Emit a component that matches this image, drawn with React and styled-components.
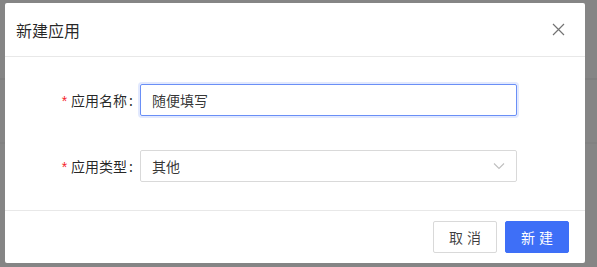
import React from "react";
import styled, { createGlobalStyle } from "styled-components";

const GlobalStyle = createGlobalStyle`
  html, body {
    margin: 0;
    padding: 0;
    background: #858585;
  }
  body {
    font-family: "Noto Sans CJK SC", "Noto Sans", sans-serif;
    font-size: 14px;
    color: rgba(0, 0, 0, 0.85);
  }
`;

const Mask = styled.div`
  width: 597px;
  height: 267px;
  box-sizing: border-box;
  padding: 3px 12px 0 5px;
  background:
    linear-gradient(#7f7f7f, #7f7f7f) 0 78px / 100% 2px no-repeat,
    linear-gradient(#818181, #818181) 0 142px / 100% 2px no-repeat,
    #858585;
`;

const Modal = styled.div`
  width: 580px;
  height: 260px;
  background: #fff;
  border-radius: 2px;
  display: flex;
  flex-direction: column;
  overflow: hidden;
`;

const Header = styled.div`
  height: 54px;
  box-sizing: border-box;
  padding: 0 20px 0 11px;
  border-bottom: 1px solid #e8e8e8;
  display: flex;
  align-items: center;
  justify-content: space-between;
`;

const Title = styled.div`
  font-size: 16px;
  font-weight: 400;
  color: rgba(0, 0, 0, 0.85);
  line-height: 22px;
`;

const Close = styled.button`
  border: 0;
  background: none;
  padding: 0;
  width: 14px;
  height: 14px;
  display: flex;
  align-items: center;
  justify-content: center;
  color: rgba(0, 0, 0, 0.55);
  cursor: pointer;
`;

const Body = styled.div`
  flex: 1;
  padding: 27px 24px 0;
  display: flex;
  flex-direction: column;
  gap: 34px;
`;

const Row = styled.div`
  display: flex;
  align-items: center;
  height: 32px;
`;

const Label = styled.label`
  width: 111px;
  flex: none;
  box-sizing: border-box;
  text-align: right;
  font-size: 14px;
  color: rgba(0, 0, 0, 0.85);
  white-space: nowrap;

  &::before {
    content: "*";
    color: #f5222d;
    margin-right: 4px;
    font-family: "Liberation Sans", sans-serif;
    font-size: 14px;
  }

  &::after {
    content: ":";
    margin: 0 7px 0 2px;
  }
`;

const Field = styled.div`
  width: 377px;
  height: 32px;
  box-sizing: border-box;
  border: 1px solid ${(p) => (p.focused ? "#6a8ff6" : "#d9d9d9")};
  box-shadow: ${(p) => (p.focused ? "0 0 0 2px rgba(61, 110, 247, 0.15)" : "none")};
  border-radius: 2px;
  padding: 0 11px;
  display: flex;
  align-items: center;
  justify-content: space-between;
  font-size: 14px;
  color: rgba(0, 0, 0, 0.8);
`;

const Footer = styled.div`
  height: 53px;
  box-sizing: border-box;
  border-top: 1px solid #e8e8e8;
  padding: 0 16px;
  display: flex;
  align-items: center;
  justify-content: flex-end;
  gap: 8px;
`;

const Button = styled.button`
  width: 64px;
  height: 32px;
  border-radius: 2px;
  font-family: inherit;
  font-size: 14px;
  letter-spacing: 4px;
  text-indent: 4px;
  cursor: pointer;
  border: 1px solid ${(p) => (p.primary ? "#3e6ff7" : "#d9d9d9")};
  background: ${(p) => (p.primary ? "#3e6ff7" : "#fff")};
  color: ${(p) => (p.primary ? "#fff" : "rgba(0, 0, 0, 0.75)")};
`;

const App = () => {
  return (
    <Mask>
      <GlobalStyle />
      <Modal>
        <Header>
          <Title>新建应用</Title>
          <Close aria-label="close">
            <svg width="13" height="13" viewBox="0 0 13 13">
              <path d="M1 1L12 12M12 1L1 12" stroke="currentColor" strokeWidth="1.2" fill="none" />
            </svg>
          </Close>
        </Header>
        <Body>
          <Row>
            <Label>应用名称</Label>
            <Field focused>随便填写</Field>
          </Row>
          <Row>
            <Label>应用类型</Label>
            <Field>
              其他
              <svg width="12" height="8" viewBox="0 0 12 8">
                <path d="M1 1.5L6 6.5L11 1.5" stroke="#bfbfbf" strokeWidth="1.1" fill="none" />
              </svg>
            </Field>
          </Row>
        </Body>
        <Footer>
          <Button>取消</Button>
          <Button primary>新建</Button>
        </Footer>
      </Modal>
    </Mask>
  );
};

export default App;
